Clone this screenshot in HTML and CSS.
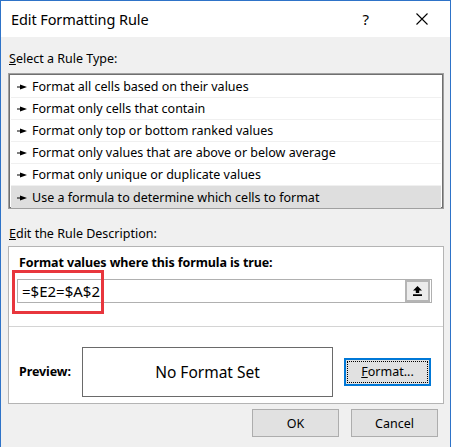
FILE: index.html
```html
<!DOCTYPE html>
<html>
<head>
<meta charset="utf-8">
<link rel="stylesheet" href="styles.css">
</head>
<body>
<div class="window">
  <div class="titlebar">
    <span class="title">Edit Formatting Rule</span>
    <span class="help">?</span>
    <span class="close"><svg width="12" height="12" viewBox="0 0 12 12"><path d="M0.5 0.5L11.5 11.5M11.5 0.5L0.5 11.5" stroke="#000" stroke-width="1.1" fill="none"/></svg></span>
  </div>
  <div class="content">
    <div class="label"><u>S</u>elect a Rule Type:</div>
    <div class="list">
      <div class="row"><svg class="bullet" width="10" height="6" viewBox="0 0 10 6"><path d="M0 2.4h4v1.2H0z M3 0.4L10 3L3 5.6z" fill="#000"/></svg><span>Format all cells based on their values</span></div>
      <div class="row"><svg class="bullet" width="10" height="6" viewBox="0 0 10 6"><path d="M0 2.4h4v1.2H0z M3 0.4L10 3L3 5.6z" fill="#000"/></svg><span>Format only cells that contain</span></div>
      <div class="row"><svg class="bullet" width="10" height="6" viewBox="0 0 10 6"><path d="M0 2.4h4v1.2H0z M3 0.4L10 3L3 5.6z" fill="#000"/></svg><span>Format only top or bottom ranked values</span></div>
      <div class="row"><svg class="bullet" width="10" height="6" viewBox="0 0 10 6"><path d="M0 2.4h4v1.2H0z M3 0.4L10 3L3 5.6z" fill="#000"/></svg><span>Format only values that are above or below average</span></div>
      <div class="row"><svg class="bullet" width="10" height="6" viewBox="0 0 10 6"><path d="M0 2.4h4v1.2H0z M3 0.4L10 3L3 5.6z" fill="#000"/></svg><span>Format only unique or duplicate values</span></div>
      <div class="row selected"><svg class="bullet" width="10" height="6" viewBox="0 0 10 6"><path d="M0 2.4h4v1.2H0z M3 0.4L10 3L3 5.6z" fill="#000"/></svg><span>Use a formula to determine which cells to format</span></div>
    </div>
    <div class="label label-desc"><u>E</u>dit the Rule Description:</div>
    <div class="panel">
      <div class="formula-area">
        <div class="bold">Format values where this formula is true:</div>
        <div class="input">
          <span class="value">=$E2=$A$2</span>
          <span class="refbtn"><svg width="9" height="10" viewBox="0 0 9 10"><path d="M4.5 0L9 4.6H6.2V7H2.8V4.6H0z M0 8.2h9v1.8H0z" fill="#000"/></svg></span>
        </div>
      </div>
      <div class="preview-area">
        <div class="bold preview-label">Preview:</div>
        <div class="preview">No Format Set</div>
        <div class="btn focused"><u>F</u>ormat...</div>
      </div>
    </div>
    <div class="actions">
      <div class="btn">OK</div>
      <div class="btn">Cancel</div>
    </div>
  </div>
  <div class="redbox"></div>
</div>
</body>
</html>
```
FILE: styles.css
```css
body {
  margin: 0;
  background: #ffffff;
  font-family: "Noto Sans", "Open Sans", sans-serif;
  color: #000;
}
.window {
  position: relative;
  width: 451px;
  height: 447px;
  box-sizing: border-box;
  border: 1px solid #2e73c8;
  border-bottom: none;
  background: #f0f0f0;
  display: flex;
  flex-direction: column;
}
.titlebar {
  flex: none;
  height: 36px;
  background: #ffffff;
  display: flex;
  align-items: center;
}
.title {
  font-size: 14.5px;
  margin-left: 10px;
  letter-spacing: -0.1px;
}
.help {
  margin-left: auto;
  font-size: 15px;
  margin-right: 47px;
}
.close {
  display: flex;
  margin-right: 22px;
}
.content {
  padding: 14px 6px 0 7px;
  font-size: 12.5px;
}
.label {
  line-height: 16px;
  padding-left: 1px;
}
.list {
  margin-top: 6px;
  background: #fff;
  border: 1px solid #a0a0a0;
  box-shadow: inset 0 0 0 1px #707070;
  padding: 2px 2px;
  height: 136px;
  box-sizing: border-box;
}
.row {
  height: 22px;
  box-sizing: border-box;
  border-bottom: 1px solid #f0f0f0;
  display: flex;
  align-items: center;
  padding-left: 6px;
}
.row.selected {
  background: #dedede;
  border-bottom: none;
}
.bullet {
  flex: none;
  margin-right: 5px;
  margin-top: 1px;
}
.label-desc {
  margin-top: 17px;
}
.panel {
  margin-top: 4px;
  background: #fff;
  border: 1px solid #b4b4b4;
  height: 158px;
  box-sizing: border-box;
  display: flex;
  flex-direction: column;
}
.bold {
  font-weight: bold;
  font-size: 12.5px;
  line-height: 16px;
  letter-spacing: -0.1px;
}
.formula-area {
  padding: 8px 11px 0 8px;
  height: 80px;
  box-sizing: border-box;
  border-bottom: 1px solid #d4d4d4;
}
.formula-area .bold {
  padding-left: 2px;
}
.input {
  margin-top: 8px;
  height: 24px;
  box-sizing: border-box;
  border: 1px solid #b0b0b0;
  display: flex;
  align-items: center;
  padding-left: 4px;
  padding-right: 1px;
}
.value {
  font-size: 15px;
}
.refbtn {
  margin-left: auto;
  width: 25px;
  height: 22px;
  box-sizing: border-box;
  border: 2px solid #b5b5b5;
  background: #ececec;
  display: flex;
  align-items: center;
  justify-content: center;
}
.preview-area {
  flex: 1;
  display: flex;
  align-items: center;
  padding: 13px 0 0 10px;
}
.preview-label {
  width: 63px;
  flex: none;
}
.preview {
  width: 251px;
  height: 50px;
  box-sizing: border-box;
  border: 1px solid #6a6a6a;
  display: flex;
  align-items: center;
  justify-content: center;
  font-size: 15.5px;
}
.btn {
  width: 87px;
  height: 28px;
  box-sizing: border-box;
  background: #e1e1e1;
  border: 1px solid #adadad;
  display: flex;
  align-items: center;
  justify-content: center;
  position: relative;
}
.btn.focused {
  margin-left: 11px;
  border: 2px solid #0078d7;
}
.btn.focused::after {
  content: "";
  position: absolute;
  inset: 1px;
  border: 1px dotted #000;
}
.actions {
  display: flex;
  justify-content: flex-end;
  gap: 12px;
  margin-top: 5px;
  padding-right: 6px;
}
.redbox {
  position: absolute;
  left: 11px;
  top: 269px;
  width: 92px;
  height: 44px;
  box-sizing: border-box;
  border: 3px solid #e8363d;
}
```
